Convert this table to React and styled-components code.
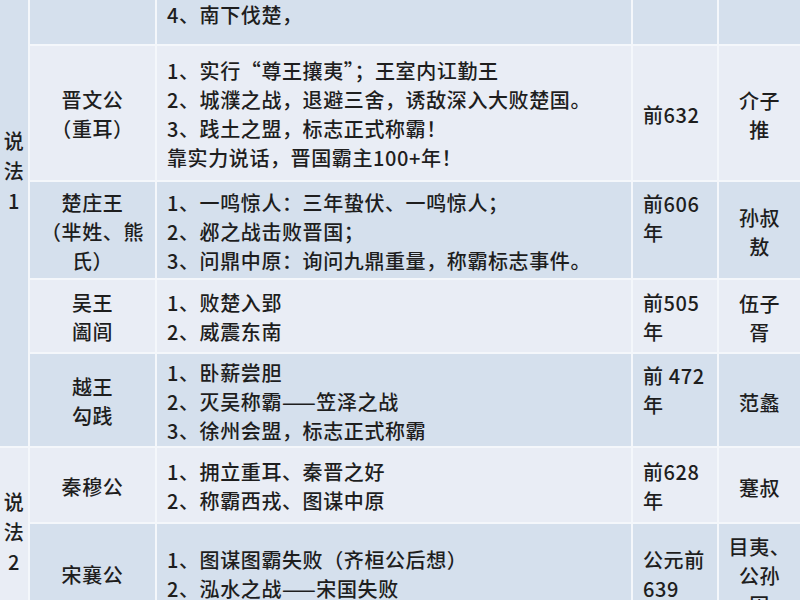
import React from "react";
import styled, { createGlobalStyle } from "styled-components";

const Global = createGlobalStyle`
  html, body { margin: 0; padding: 0; background: #f4f7fb; }
  body { width: 800px; height: 600px; overflow: hidden; }
`;

const BLUE = "#d5e0ed";
const LIGHT = "#e9edf5";

const Table = styled.div`
  display: grid;
  width: 800px;
  grid-template-columns: 28px 125px 474px 84px 81px;
  grid-template-rows: 44px 134px 96px 72px 92px 74px 98px;
  gap: 2px;
  background: #f4f7fb;
  font-family: "Noto Sans CJK SC", "Noto Sans", sans-serif;
  font-size: 20px;
  font-weight: 500;
  letter-spacing: 0.6px;
  color: #1e1e1e;
`;

const Cell = styled.div`
  background: ${(p) => p.$bg};
  display: flex;
  flex-direction: column;
  justify-content: ${(p) => (p.$valign === "top" ? "flex-start" : "center")};
  align-items: ${(p) => (p.$halign === "left" ? "flex-start" : "center")};
  padding: ${(p) => p.$pad || "0 10px"};
  grid-row: ${(p) => (p.$span ? `span ${p.$span}` : "auto")};
  line-height: 29px;
  white-space: nowrap;
  overflow: hidden;
`;

const GroupCell = styled(Cell)`
  line-height: 30px;
  padding: ${(p) => p.$pad || "0"};
`;

const Line = styled.div`
  display: block;
`;

const Lines = ({ items }) => items.map((t, i) => <Line key={i}>{t}</Line>);

const rows = [
  {
    bg: BLUE,
    name: [],
    deeds: ["4、南下伐楚，"],
    deedsTop: true,
    year: [],
    aide: [],
  },
  {
    bg: LIGHT,
    name: ["晋文公", "（重耳）"],
    deeds: [
      "1、实行“尊王攘夷”；王室内讧勤王",
      "2、城濮之战，退避三舍，诱敌深入大败楚国。",
      "3、践土之盟，标志正式称霸！",
      "靠实力说话，晋国霸主100+年！",
    ],
    year: ["前632"],
    aide: ["介子", "推"],
  },
  {
    bg: BLUE,
    name: ["楚庄王", "（芈姓、熊", "氏）"],
    deeds: [
      "1、一鸣惊人：三年蛰伏、一鸣惊人；",
      "2、邲之战击败晋国；",
      "3、问鼎中原：询问九鼎重量，称霸标志事件。",
    ],
    year: ["前606", "年"],
    yearTop: true,
    aide: ["孙叔", "敖"],
  },
  {
    bg: LIGHT,
    name: ["吴王", "阖闾"],
    deeds: ["1、败楚入郢", "2、威震东南"],
    year: ["前505", "年"],
    aide: ["伍子", "胥"],
  },
  {
    bg: BLUE,
    name: ["越王", "勾践"],
    deeds: ["1、卧薪尝胆", "2、灭吴称霸——笠泽之战", "3、徐州会盟，标志正式称霸"],
    year: ["前 472", "年"],
    yearTop: true,
    aide: ["范蠡"],
  },
  {
    bg: LIGHT,
    name: ["秦穆公"],
    deeds: ["1、拥立重耳、秦晋之好", "2、称霸西戎、图谋中原"],
    year: ["前628", "年"],
    aide: ["蹇叔"],
  },
  {
    bg: BLUE,
    name: ["宋襄公"],
    deeds: ["1、图谋图霸失败（齐桓公后想）", "2、泓水之战——宋国失败"],
    year: ["公元前", "639"],
    aide: ["目夷、", "公孙", "固"],
  },
];

export default function App() {
  const cells = [];
  rows.forEach((r, i) => {
    if (i === 0) {
      cells.push(
        <GroupCell key="g1" $bg={BLUE} $span={5} $valign="top" $pad="126px 0 0">
          <Lines items={["说", "法", "1"]} />
        </GroupCell>
      );
    }
    if (i === 5) {
      cells.push(
        <GroupCell key="g2" $bg={LIGHT} $span={2} $pad="0 0 6px">
          <Lines items={["说", "法", "2"]} />
        </GroupCell>
      );
    }
    cells.push(
      <Cell key={`n${i}`} $bg={r.bg} $pad="2px 4px 0">
        <Lines items={r.name} />
      </Cell>
    );
    cells.push(
      <Cell
        key={`d${i}`}
        $bg={r.bg}
        $halign="left"
        $valign={r.deedsTop ? "top" : "center"}
        $pad={r.deedsTop ? "0 10px" : "2px 10px 0"}
      >
        <Lines items={r.deeds} />
      </Cell>
    );
    cells.push(
      <Cell
        key={`y${i}`}
        $bg={r.bg}
        $halign="left"
        $valign={r.yearTop ? "top" : "center"}
        $pad={r.yearTop ? "7px 10px 0" : "2px 10px 0"}
      >
        <Lines items={r.year} />
      </Cell>
    );
    cells.push(
      <Cell key={`a${i}`} $bg={r.bg} $pad="4px 4px 0">
        <Lines items={r.aide} />
      </Cell>
    );
  });

  return (
    <>
      <Global />
      <Table>{cells}</Table>
    </>
  );
}
